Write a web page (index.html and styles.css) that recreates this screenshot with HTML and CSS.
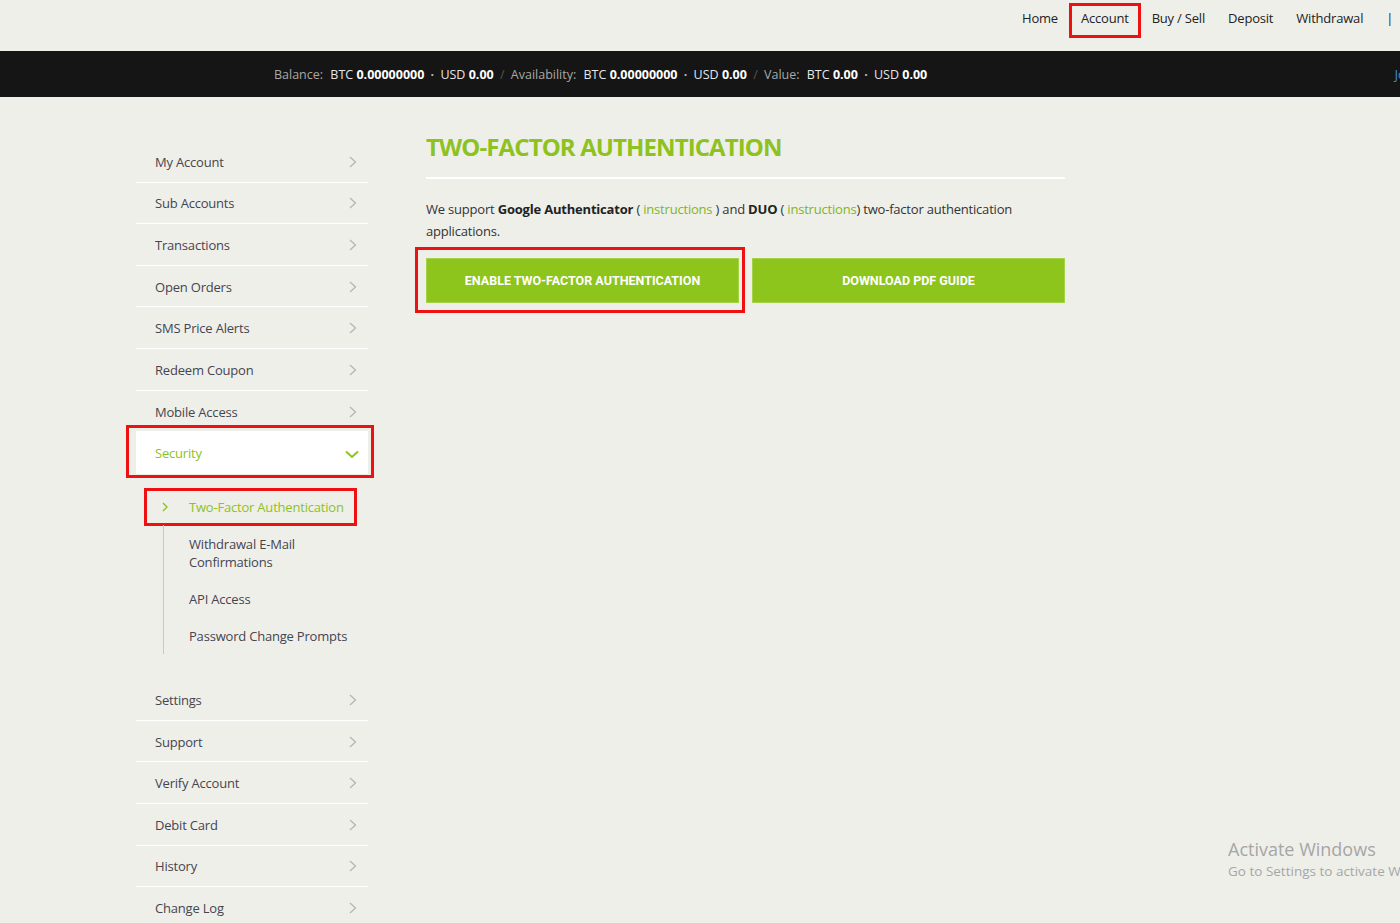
FILE: index.html
```html
<!DOCTYPE html>
<html>
<head>
<meta charset="utf-8">
<link rel="stylesheet" href="styles.css">
</head>
<body>
<header class="topnav">
  <a class="nav-link">Home</a>
  <a class="nav-link annot-account">Account</a>
  <a class="nav-link">Buy / Sell</a>
  <a class="nav-link">Deposit</a>
  <a class="nav-link">Withdrawal</a>
  <span class="nav-sep">|</span>
</header>
<div class="balbar">
  <div class="bal-items">
    <span class="lbl">Balance:</span> <span class="cur">BTC</span> <b>0.00000000</b> <span class="dot">·</span> <span class="cur">USD</span> <b>0.00</b> <span class="sl">/</span>
    <span class="lbl">Availability:</span> <span class="cur">BTC</span> <b>0.00000000</b> <span class="dot">·</span> <span class="cur">USD</span> <b>0.00</b> <span class="sl">/</span>
    <span class="lbl">Value:</span> <span class="cur">BTC</span> <b>0.00</b> <span class="dot">·</span> <span class="cur">USD</span> <b>0.00</b>
  </div>
  <span class="bal-user">John</span>
</div>
<div class="page">
  <aside class="sidebar">
    <ul class="menu">
      <li class="mi">My Account<svg class="chev" viewBox="0 0 8 12"><polyline points="1,1 6.5,6 1,11"/></svg></li>
      <li class="mi">Sub Accounts<svg class="chev" viewBox="0 0 8 12"><polyline points="1,1 6.5,6 1,11"/></svg></li>
      <li class="mi">Transactions<svg class="chev" viewBox="0 0 8 12"><polyline points="1,1 6.5,6 1,11"/></svg></li>
      <li class="mi">Open Orders<svg class="chev" viewBox="0 0 8 12"><polyline points="1,1 6.5,6 1,11"/></svg></li>
      <li class="mi">SMS Price Alerts<svg class="chev" viewBox="0 0 8 12"><polyline points="1,1 6.5,6 1,11"/></svg></li>
      <li class="mi">Redeem Coupon<svg class="chev" viewBox="0 0 8 12"><polyline points="1,1 6.5,6 1,11"/></svg></li>
      <li class="mi mi-noline">Mobile Access<svg class="chev" viewBox="0 0 8 12"><polyline points="1,1 6.5,6 1,11"/></svg></li>
      <li class="mi mi-active annot-security">Security<svg class="chev-down" viewBox="0 0 14 9"><polyline points="1,1.5 7,7 13,1.5"/></svg></li>
      <li class="sub">
        <ul class="submenu">
          <li class="si si-active annot-tfa"><svg class="chev-sub" viewBox="0 0 6 10"><polyline points="1,1 5,5 1,9"/></svg>Two-Factor Authentication</li>
          <li class="si">Withdrawal E-Mail<br>Confirmations</li>
          <li class="si">API Access</li>
          <li class="si">Password Change Prompts</li>
        </ul>
      </li>
      <li class="mi">Settings<svg class="chev" viewBox="0 0 8 12"><polyline points="1,1 6.5,6 1,11"/></svg></li>
      <li class="mi">Support<svg class="chev" viewBox="0 0 8 12"><polyline points="1,1 6.5,6 1,11"/></svg></li>
      <li class="mi">Verify Account<svg class="chev" viewBox="0 0 8 12"><polyline points="1,1 6.5,6 1,11"/></svg></li>
      <li class="mi">Debit Card<svg class="chev" viewBox="0 0 8 12"><polyline points="1,1 6.5,6 1,11"/></svg></li>
      <li class="mi">History<svg class="chev" viewBox="0 0 8 12"><polyline points="1,1 6.5,6 1,11"/></svg></li>
      <li class="mi">Change Log<svg class="chev" viewBox="0 0 8 12"><polyline points="1,1 6.5,6 1,11"/></svg></li>
    </ul>
  </aside>
  <main class="content">
    <h1 class="title">TWO-FACTOR AUTHENTICATION</h1>
    <p class="intro">We support <b>Google Authenticator</b> ( <a class="lnk">instructions</a> ) and <b>DUO</b> ( <a class="lnk">instructions</a>) two-factor authentication applications.</p>
    <div class="btns">
      <a class="btn annot-btn">ENABLE TWO-FACTOR AUTHENTICATION</a>
      <a class="btn">DOWNLOAD PDF GUIDE</a>
    </div>
  </main>
</div>
<div class="watermark">
  <div class="wm1">Activate Windows</div>
  <div class="wm2">Go to Settings to activate Windows.</div>
</div>
</body>
</html>
```
FILE: styles.css
```css
* { box-sizing: border-box; }
html, body { margin: 0; padding: 0; }
body {
  background: #efefea;
  font-family: "Open Sans", "Liberation Sans", sans-serif;
  color: #333;
  width: 1400px;
  overflow: hidden;
}
ul { list-style: none; margin: 0; padding: 0; }

/* top nav */
.topnav {
  height: 51px;
  display: flex;
  align-items: flex-start;
  padding: 9px 0 0 1022px;
  gap: 23px;
  white-space: nowrap;
  font-size: 13px;
  line-height: 18px;
  letter-spacing: -0.2px;
  color: #222;
}
.nav-link { position: relative; color: #222; }
.nav-sep { color: #222; }
.annot-account::after {
  content: "";
  position: absolute;
  left: -12px; right: -12px; top: -6px; bottom: -11px;
  border: 3px solid #ee1111;
}

/* balance bar */
.balbar {
  height: 46px;
  background: #151515;
  display: flex;
  align-items: center;
  padding-left: 274px;
  font-size: 12.5px;
  white-space: nowrap;
  overflow: hidden;
}
.bal-items { color: #e6e6e6; }
.bal-items b { color: #fff; font-weight: 700; }
.lbl { color: #a8a8a8; margin-right: 4px; }
.cur { color: #e6e6e6; }
.dot { color: #bbb; margin: 0 3px; font-weight: 700; }
.sl { color: #555; margin: 0 3px; }
.bal-user { margin-left: auto; margin-right: -20px; color: #3b8fe8; font-size: 12px; }

/* layout */
.page {
  display: flex;
  gap: 58px;
  padding: 44px 0 0 136px;
}

/* sidebar */
.sidebar { width: 232px; flex: none; letter-spacing: -0.2px; }
.mi {
  position: relative;
  height: 41.6px;
  display: flex;
  align-items: center;
  justify-content: space-between;
  padding: 1px 11px 0 19px;
  border-bottom: 1px solid #ffffff;
  font-size: 13px;
  color: #454550;
}
.mi-noline { border-bottom: none; }
.chev { width: 8px; height: 12px; fill: none; stroke: #b5b5b5; stroke-width: 1.3; }
.mi-active {
  background: #ffffff;
  height: 43px;
  color: #8dc21f;
  border-bottom: none;
  padding-right: 9px;
  margin-top: -1px;
}
.chev-down { width: 14px; height: 9px; fill: none; stroke: #8dc21f; stroke-width: 2; margin-top: 2px; }
.annot-security::after {
  content: "";
  position: absolute;
  left: -10px; right: -6px; top: -6px; bottom: -4px;
  border: 3px solid #ee1111;
}
.sub { padding: 14px 0 25px 0; }
.submenu { padding-left: 27px; }
.si {
  position: relative;
  padding: 9.5px 0 9.5px 25px;
  font-size: 13px;
  line-height: 18px;
  color: #454550;
  border-left: 1px solid #c8c8c4;
}
.si-active {
  border-left-color: transparent;
  color: #8dc21f;
  padding-left: 0;
  display: flex;
  align-items: center;
  margin-left: -2px;
}
.chev-sub { width: 6px; height: 10px; fill: none; stroke: #8dc21f; stroke-width: 1.4; margin-right: 21px; }
.annot-tfa::after {
  content: "";
  position: absolute;
  left: -18px; right: 11px; top: 0; bottom: -1px;
  border: 3px solid #ee1111;
}

/* main */
.content { width: 639px; flex: none; margin-top: -9px; }
.title {
  margin: 0;
  font-size: 24px;
  line-height: 30px;
  font-weight: 700;
  color: #8dc21f;
  letter-spacing: -0.9px;
  padding-bottom: 15px;
  border-bottom: 2px solid #ffffff;
}
.intro {
  margin: 19px 0 0 0;
  font-size: 13px;
  line-height: 22px;
  letter-spacing: -0.2px;
  color: #333;
}
.intro b { color: #222; font-weight: 700; }
.lnk { color: #7db527; }
.btns {
  display: flex;
  gap: 13px;
  margin-top: 16px;
}
.btn {
  position: relative;
  flex: 1;
  height: 45px;
  display: flex;
  align-items: center;
  justify-content: center;
  background: #8dc51c;
  border: 1px solid #a6d24a;
  color: #fff;
  font-family: Roboto, "Liberation Sans", sans-serif;
  font-weight: 700;
  font-size: 12.5px;
  letter-spacing: 0;
}
.annot-btn::after {
  content: "";
  position: absolute;
  left: -12px; right: -7px; top: -12px; bottom: -11px;
  border: 3px solid #ee1111;
}

/* watermark */
.watermark {
  position: absolute;
  left: 1228px;
  top: 837px;
  color: #a6a6a6;
  white-space: nowrap;
}
.wm1 { font-size: 18px; line-height: 24px; }
.wm2 { font-size: 13.5px; line-height: 20px; }
```
